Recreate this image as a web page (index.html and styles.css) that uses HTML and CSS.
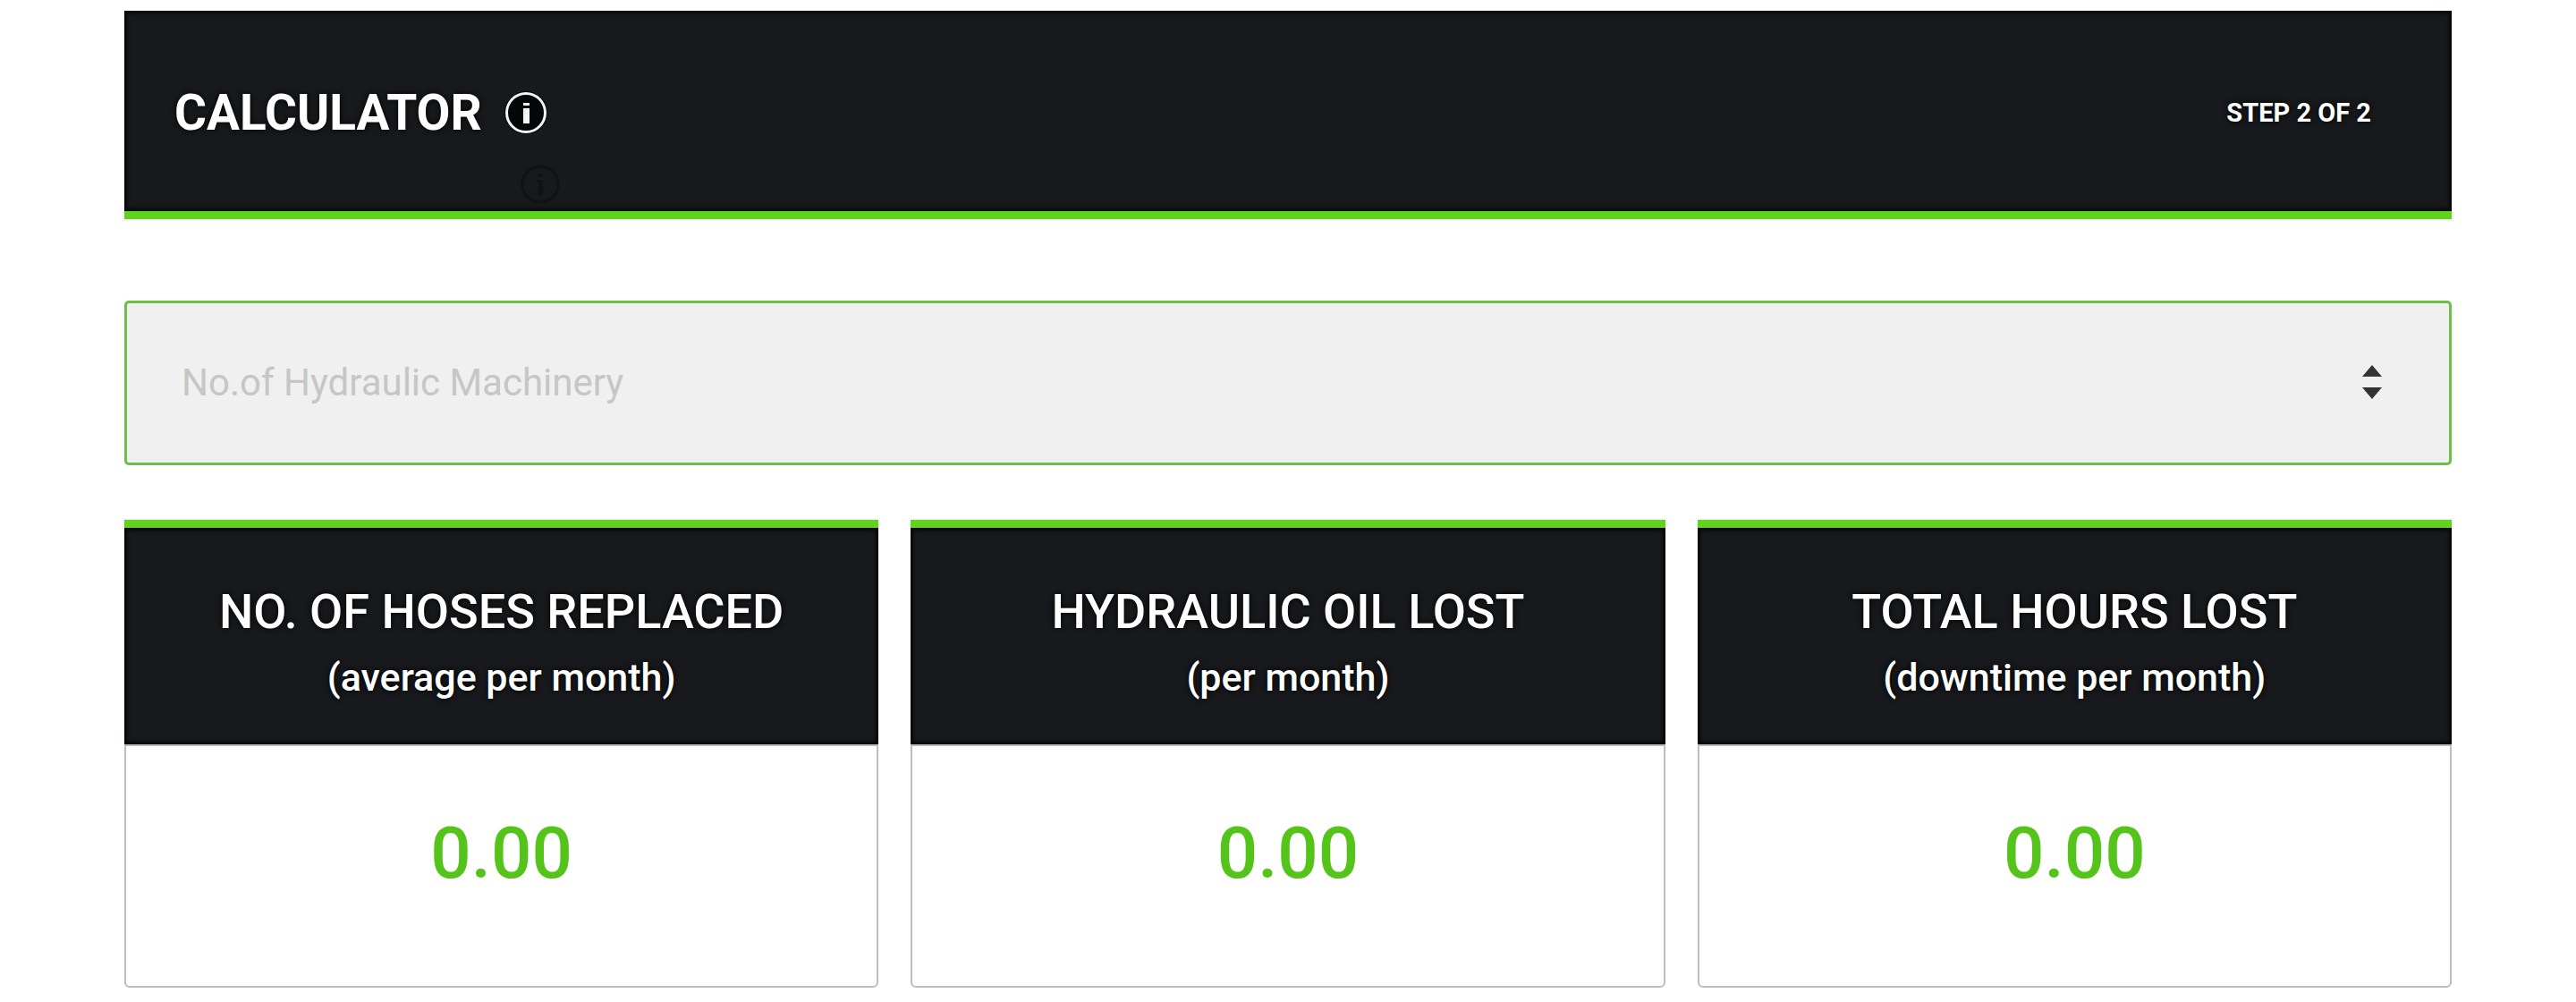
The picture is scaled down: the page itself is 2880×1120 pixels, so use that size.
FILE: index.html
```html
<!DOCTYPE html>
<html lang="en">
<head>
<meta charset="utf-8">
<meta name="viewport" content="width=device-width, initial-scale=1">
<title>Calculator</title>
<link rel="stylesheet" href="styles.css">
</head>
<body>
<main class="calculator">
  <header class="banner">
    <h1 class="banner-title">CALCULATOR</h1>
    <div class="info">
      <button class="info-button" type="button" aria-label="About the calculator">
        <svg class="info-icon" viewBox="0 0 48 48" aria-hidden="true">
          <circle cx="24" cy="24" r="24" fill="#050607"/>
          <circle cx="24" cy="24" r="21.5" fill="none" stroke="currentColor" stroke-width="3"/>
          <path d="M21 13h7v3h-7zM21 19h7v17h-7z" fill="currentColor"/>
        </svg>
      </button>
      <svg class="info-icon info-ghost" viewBox="0 0 48 48" aria-hidden="true">
        <circle cx="24" cy="24" r="20" fill="none" stroke="currentColor" stroke-width="3"/>
        <path d="M21 12h6v4h-6zM19 19h8v17h-5V22h-3z" fill="currentColor"/>
      </svg>
    </div>
    <p class="step">STEP 2 OF 2</p>
  </header>

  <div class="field">
    <select class="field-select" aria-label="No.of Hydraulic Machinery">
      <option>No.of Hydraulic Machinery</option>
    </select>
    <svg class="field-arrows" viewBox="0 0 22 38" aria-hidden="true">
      <path d="M11 0l11 13H0zM0 25h22L11 38z" fill="currentColor"/>
    </svg>
  </div>

  <section class="results">
    <article class="card">
      <header class="card-head">
        <h2 class="card-title">NO. OF HOSES REPLACED</h2>
        <p class="card-note">(average per month)</p>
      </header>
      <p class="card-value">0.00</p>
    </article>
    <article class="card">
      <header class="card-head">
        <h2 class="card-title">HYDRAULIC OIL LOST</h2>
        <p class="card-note">(per month)</p>
      </header>
      <p class="card-value">0.00</p>
    </article>
    <article class="card">
      <header class="card-head">
        <h2 class="card-title">TOTAL HOURS LOST</h2>
        <p class="card-note">(downtime per month)</p>
      </header>
      <p class="card-value">0.00</p>
    </article>
  </section>
</main>
</body>
</html>
```
FILE: styles.css
```css
:root {
  --green: #5fd41c;
  --green-text: #55c41a;
  --dark: #17191c;
}

* {
  box-sizing: border-box;
}

body {
  margin: 0;
  background: #fff;
  font-family: Roboto, "Liberation Sans", sans-serif;
}

h1, h2, p {
  margin: 0;
}

.calculator {
  padding: 12px 139px 16px;
}

.banner {
  display: flex;
  align-items: center;
  padding: 78px 90px 74px 56px;
  border-bottom: 9px solid var(--green);
  background: var(--dark);
  box-shadow: inset 0 0 5px 2px #000;
  color: #fff;
}

.banner-title {
  font-size: 55px;
  font-weight: 700;
  line-height: 72px;
  text-shadow: 0 0 6px #000;
}

.info {
  position: relative;
  display: flex;
  margin-left: 25px;
}

.info-button {
  display: flex;
  padding: 0;
  border: 0;
  background: none;
  color: #f4f4f4;
}

.info-icon {
  width: 48px;
  height: 48px;
}

.info-ghost {
  position: absolute;
  top: 80px;
  left: 16px;
  color: #101214;
}

.step {
  margin-left: auto;
  font-size: 29px;
  font-weight: 700;
  line-height: 36px;
  text-shadow: 0 0 6px #000;
}

.field {
  position: relative;
  margin-top: 91px;
}

.field-select {
  display: block;
  width: 100%;
  padding: 64px 120px 64px 61px;
  border: 3px solid #6ac04a;
  border-radius: 5px;
  background: #f0f0f0;
  color: #c6c6c6;
  font-family: inherit;
  font-size: 42px;
  line-height: 50px;
  appearance: none;
}

.field-arrows {
  position: absolute;
  top: 72px;
  right: 78px;
  width: 22px;
  height: 38px;
  color: #333;
  pointer-events: none;
}

.results {
  display: grid;
  grid-template-columns: repeat(3, 1fr);
  gap: 36px;
  margin-top: 61px;
}

.card {
  text-align: center;
}

.card-head {
  padding: 60px 24px 42px;
  border-top: 9px solid var(--green);
  background: var(--dark);
  box-shadow: inset 0 0 5px 2px #000;
  color: #fff;
  text-shadow: 0 0 6px #000;
}

.card-title {
  font-size: 54px;
  font-weight: 500;
  line-height: 68px;
}

.card-note {
  padding-top: 6px;
  font-size: 43px;
  font-weight: 500;
  line-height: 66px;
}

.card-value {
  padding: 72px 24px 100px;
  border: 2px solid #bdbdbd;
  border-radius: 0 0 6px 6px;
  color: var(--green-text);
  font-size: 80px;
  font-weight: 500;
  line-height: 96px;
}
```
